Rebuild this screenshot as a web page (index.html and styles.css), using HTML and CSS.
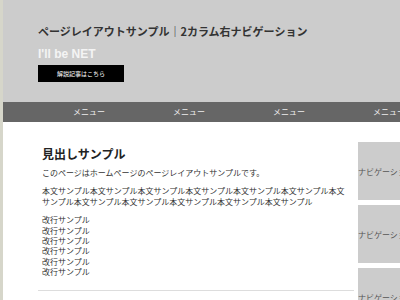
FILE: index.html
```html
<!DOCTYPE html>
<html lang="ja">
  <head>
    <meta charset="UTF-8" />
    <meta name="viewport" content="width=device-width, initial-scale=1.0" />
    <title>ページレイアウトサンプル</title>
    <link rel="stylesheet" href="styles.css">
  </head>
  <body>
    <header class="site-header">
      <h1 class="site-title">ページレイアウトサンプル｜2カラム右ナビゲーション</h1>
      <p class="site-logo">I'll be NET</p>
      <a class="header-btn" href="#">解説記事はこちら</a>
    </header>

    <nav class="global-nav">
      <ul>
        <li>メニュー</li>
        <li>メニュー</li>
        <li>メニュー</li>
        <li>メニュー</li>
      </ul>
    </nav>

    <div class="wrapper">
      <main class="main">
        <article class="post">
          <h2>見出しサンプル</h2>
          <p>このページはホームページのページレイアウトサンプルです。</p>
          <p>本文サンプル本文サンプル本文サンプル本文サンプル本文サンプル本文サンプル本文サンプル本文サンプル本文サンプル本文サンプル本文サンプル本文サンプル</p>
          <p>
            改行サンプル<br>
            改行サンプル<br>
            改行サンプル<br>
            改行サンプル<br>
            改行サンプル<br>
            改行サンプル
          </p>
        </article>
      </main>
      <aside class="side">
        <div class="side-item">ナビゲーション</div>
        <div class="side-item">ナビゲーション</div>
        <div class="side-item">ナビゲーション</div>
      </aside>
    </div>
  </body>
</html>
```

FILE: styles.css
```css
html,
body {
  overflow: hidden;
}
body {
  margin: 0;
  border-left: 3px solid #d6d6ca;
  font-family: "Noto Sans CJK JP", sans-serif;
  color: #333;
  background: #ffffff;
  min-height: 300px;
}
.site-header {
  background: #cccccc;
  padding: 23px 35px 20px;
}
.site-title {
  margin: 0;
  font-size: 11px;
  line-height: 16px;
  font-weight: bold;
  color: #333;
}
.site-logo {
  margin: 8px 0 0;
  font-family: "Liberation Sans", Arial, sans-serif;
  font-size: 12px;
  line-height: 14px;
  font-weight: bold;
  color: #f4f4f4;
}
.header-btn {
  display: flex;
  justify-content: center;
  align-items: center;
  width: 86px;
  height: 17px;
  margin-top: 4px;
  background: #000000;
  color: #ffffff;
  font-size: 6px;
  text-decoration: none;
}
.global-nav {
  background: #666666;
  height: 20px;
}
.global-nav ul {
  display: flex;
  margin: 0;
  padding: 0 0 0 36px;
  list-style: none;
  white-space: nowrap;
}
.global-nav li {
  flex: 0 0 100px;
  text-align: center;
  font-size: 8px;
  line-height: 20px;
  color: #eeeeee;
}
.wrapper {
  display: flex;
  align-items: flex-start;
  gap: 4px;
  padding-left: 35px;
}
.main {
  flex: 0 0 316px;
}
.post {
  padding: 24px 4px 12px;
  border-bottom: 1px solid #dddddd;
}
.post h2 {
  margin: 0 0 6px;
  font-size: 12px;
  line-height: 16px;
  font-weight: bold;
  color: #222;
}
.post p {
  margin: 0 0 8px;
  font-size: 8px;
  line-height: 10.4px;
}
.post p:last-child {
  margin-bottom: 0;
}
.side {
  flex: 0 0 50px;
  display: flex;
  flex-direction: column;
  gap: 5px;
  margin-top: 20px;
}
.side-item {
  display: flex;
  justify-content: center;
  align-items: center;
  height: 58px;
  background: #cccccc;
  color: #555;
  font-size: 8px;
  white-space: nowrap;
}
```
